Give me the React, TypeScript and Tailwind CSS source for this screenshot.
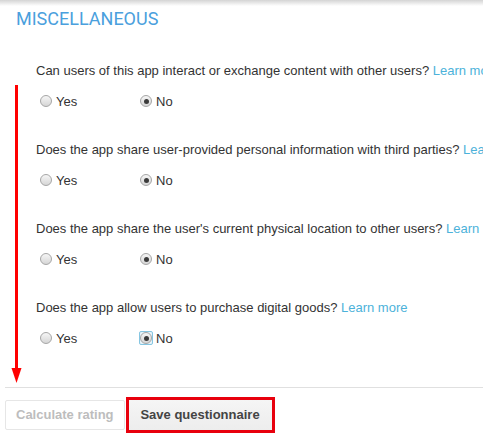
import clsx from 'clsx';

// Questionnaire « Miscellaneous » : 4 questions oui/non, annotations rouges
// (flèche + cadre autour du bouton d'enregistrement) par-dessus.

type Question = { text: string; focused?: boolean };

const QUESTIONS: Question[] = [
  { text: 'Can users of this app interact or exchange content with other users?' },
  { text: 'Does the app share user-provided personal information with third parties?' },
  { text: "Does the app share the user's current physical location to other users?" },
  { text: 'Does the app allow users to purchase digital goods?', focused: true },
];

function Radio({ checked, focused }: { checked?: boolean; focused?: boolean }) {
  return (
    <span className="relative -top-[1px] flex h-[16px] w-[16px] shrink-0 items-center justify-center">
      {focused && (
        <span className="absolute inset-[1px] rounded-[2px] border border-[#86c6e2] bg-[#e6f3f9]" />
      )}
      <span className="relative flex h-[12px] w-[12px] items-center justify-center rounded-full border border-[#a6a6a6] bg-gradient-to-b from-[#f6f6f6] to-[#d6d6d6]">
        {checked && <span className="h-[5px] w-[5px] rounded-full bg-[#3b3b3b]" />}
      </span>
    </span>
  );
}

function QuestionBlock({ q }: { q: Question }) {
  return (
    <div className="flex flex-col">
      <p className="whitespace-nowrap text-[13px] leading-[16px] text-[#333]">
        {q.text} <span className="text-[#4cb2da]">Learn more</span>
      </p>
      <div className="mt-[15px] flex h-[16px] items-center pl-[2px] text-[13px] leading-[16px] text-[#333]">
        <label className="flex w-[100px] items-center gap-[2px]">
          <Radio />
          <span>Yes</span>
        </label>
        <label className="flex items-center gap-[2px]">
          <Radio checked focused={q.focused} />
          <span>No</span>
        </label>
      </div>
    </div>
  );
}

export default function App() {
  return (
    <div className="relative h-[438px] w-[483px] overflow-hidden bg-white font-['Liberation_Sans',Arial,sans-serif]">
      <div className="absolute inset-x-0 top-0 h-[6px] bg-gradient-to-b from-[#d4d4d4] to-transparent" />

      <h2 className="pl-[16px] pt-[7px] font-['Roboto',sans-serif] text-[18px] leading-[24px] font-normal text-[#4aa0dd]">
        MISCELLANEOUS
      </h2>

      <div className="mt-[32px] flex flex-col gap-[32px] pl-[36px]">
        {QUESTIONS.map((q) => (
          <QuestionBlock key={q.text} q={q} />
        ))}
      </div>

      <div className="ml-[5px] mt-[40px] h-px bg-[#e0e0e0]" />

      <div className="mt-[9px] flex items-center pl-[5px]">
        <button
          type="button"
          disabled
          className="h-[30px] rounded-[2px] border border-[#e6e6e6] bg-white px-[10px] text-[13px] font-bold text-[#bdbdbd]"
        >
          Calculate rating
        </button>
        <div className="ml-[1px] border-[3px] border-[#e8000d]">
          <button
            type="button"
            className={clsx(
              'h-[30px] w-[143px] bg-gradient-to-b from-[#f5f5f5] to-[#ededed]',
              'text-[13px] font-bold text-[#444]',
            )}
          >
            Save questionnaire
          </button>
        </div>
      </div>

      {/* annotation : flèche rouge */}
      <svg className="absolute left-0 top-0" width="30" height="390" viewBox="0 0 30 390">
        <rect x="15" y="85" width="3" height="285" fill="#ff0000" />
        <polygon points="11.5,368 21.5,368 16.5,383" fill="#ff0000" />
      </svg>
    </div>
  );
}
